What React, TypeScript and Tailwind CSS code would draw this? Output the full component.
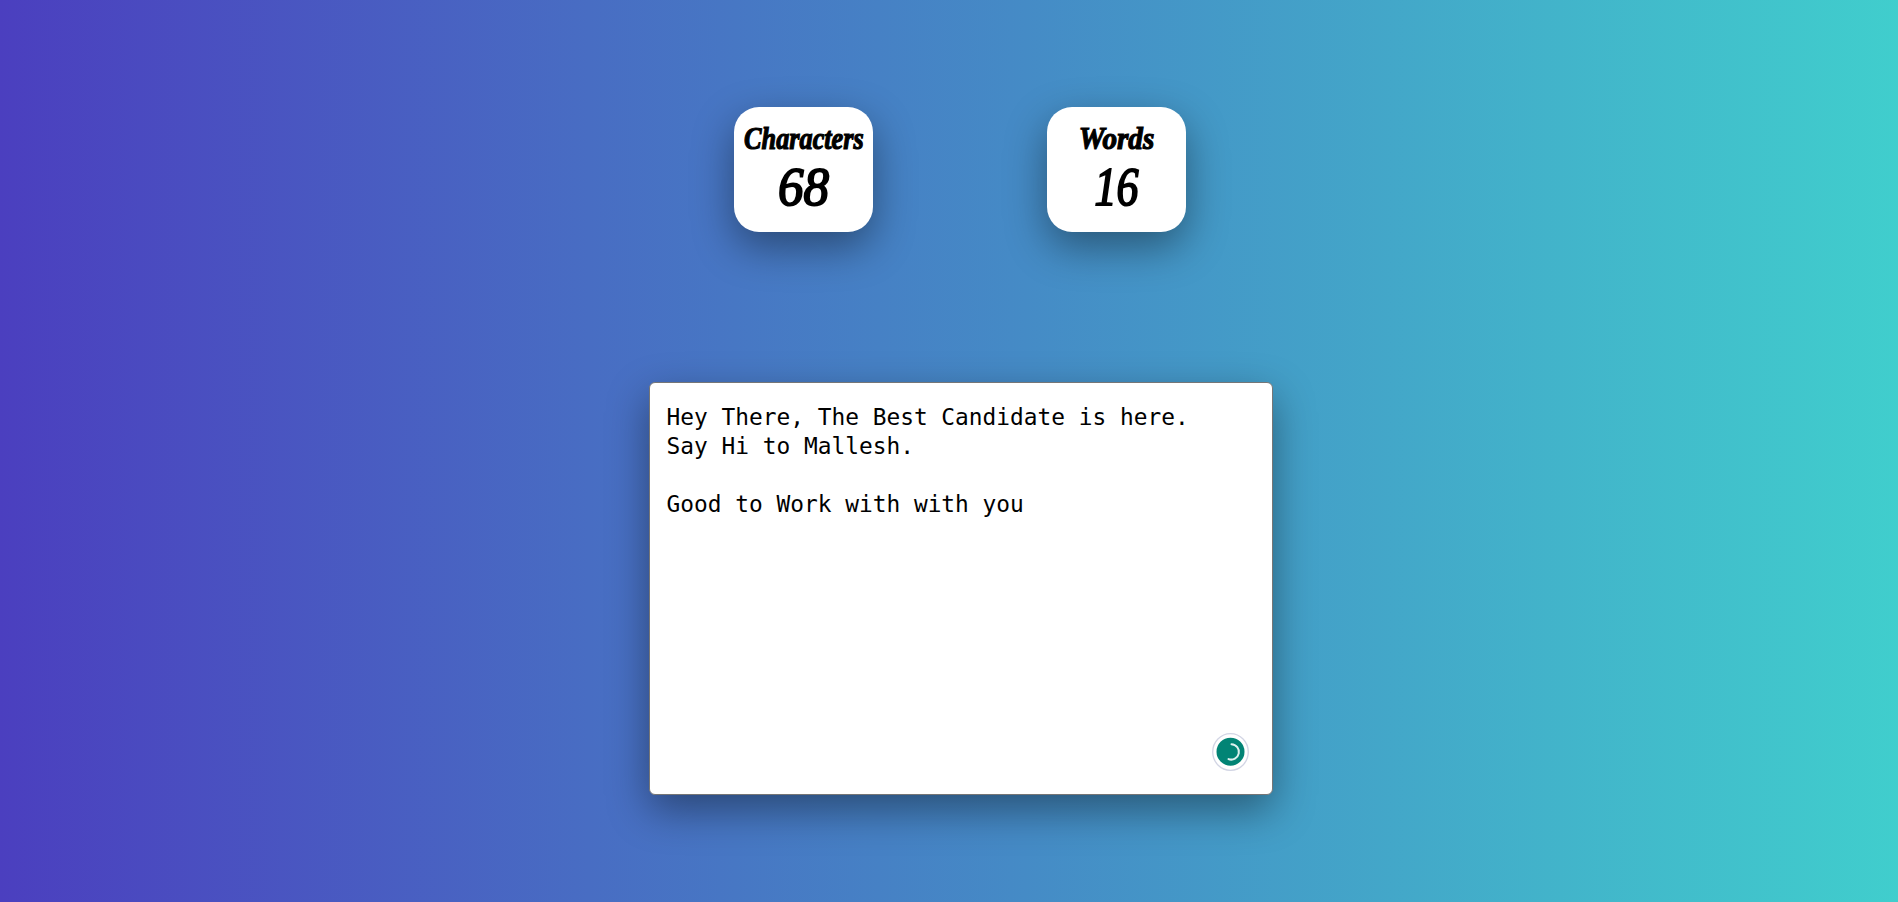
import { useState } from "react";

function Counter({ label, value, labelClass, valueClass }: { label: string; value: number; labelClass: string; valueClass: string }) {
  return (
    <div className="flex h-[125px] w-[139px] flex-col items-center rounded-[25px] bg-white pt-[13px] text-black shadow-[0_15px_42px_rgba(0,0,0,0.4)]">
      <h2 className={`text-[32px] leading-[36px] font-bold whitespace-nowrap italic [-webkit-text-stroke:1.2px_black] ${labelClass}`}>{label}</h2>
      <p className={`pt-px text-[55px] leading-[60px] italic [-webkit-text-stroke:2px_black] ${valueClass}`}>{value}</p>
    </div>
  );
}

export default function App() {
  const [text, setText] = useState(
    "Hey There, The Best Candidate is here.\nSay Hi to Mallesh.\n\nGood to Work with with you",
  );
  return (
    <main className="flex h-screen flex-col items-center overflow-hidden bg-[linear-gradient(to_right,#4b3fbf_0%,#486dc3_31%,#458bc6_54%,#40d0cd_101.5%)] pt-[107px] pl-[22px] font-['Liberation_Serif',serif]">
      <div className="flex gap-[174px]">
        <Counter label="Characters" value={68} labelClass="scale-x-[0.82]" valueClass="scale-x-[0.93]" />
        <Counter label="Words" value={16} labelClass="scale-x-[0.91]" valueClass="scale-x-[0.8]" />
      </div>
      <div className="relative mt-[150px] ml-px h-[413px] w-[624px]">
        <textarea
          spellCheck={false}
          value={text}
          onChange={(e) => setText(e.target.value)}
          className="block h-full w-full resize-none rounded-[6px] border border-[#767676] bg-white px-[17px] py-[20px] font-['DejaVu_Sans_Mono',monospace] text-[22.83px] leading-[29px] text-black shadow-[0_15px_42px_rgba(0,0,0,0.4)] outline-none"
        />
        <svg className="absolute right-[23px] bottom-[24px] size-[38px]" viewBox="0 0 38 38" fill="none">
          <ellipse cx="18.5" cy="19" rx="17.8" ry="18.3" fill="white" stroke="#d2d5e4" strokeWidth="1.3" />
          <circle cx="18.5" cy="18.7" r="14" fill="#028475" />
          <path d="M19.5 11.2A7.7 7.7 0 1 1 16.5 26.1" stroke="#dff1ef" strokeWidth="2" strokeLinecap="round" />
        </svg>
      </div>
    </main>
  );
}
